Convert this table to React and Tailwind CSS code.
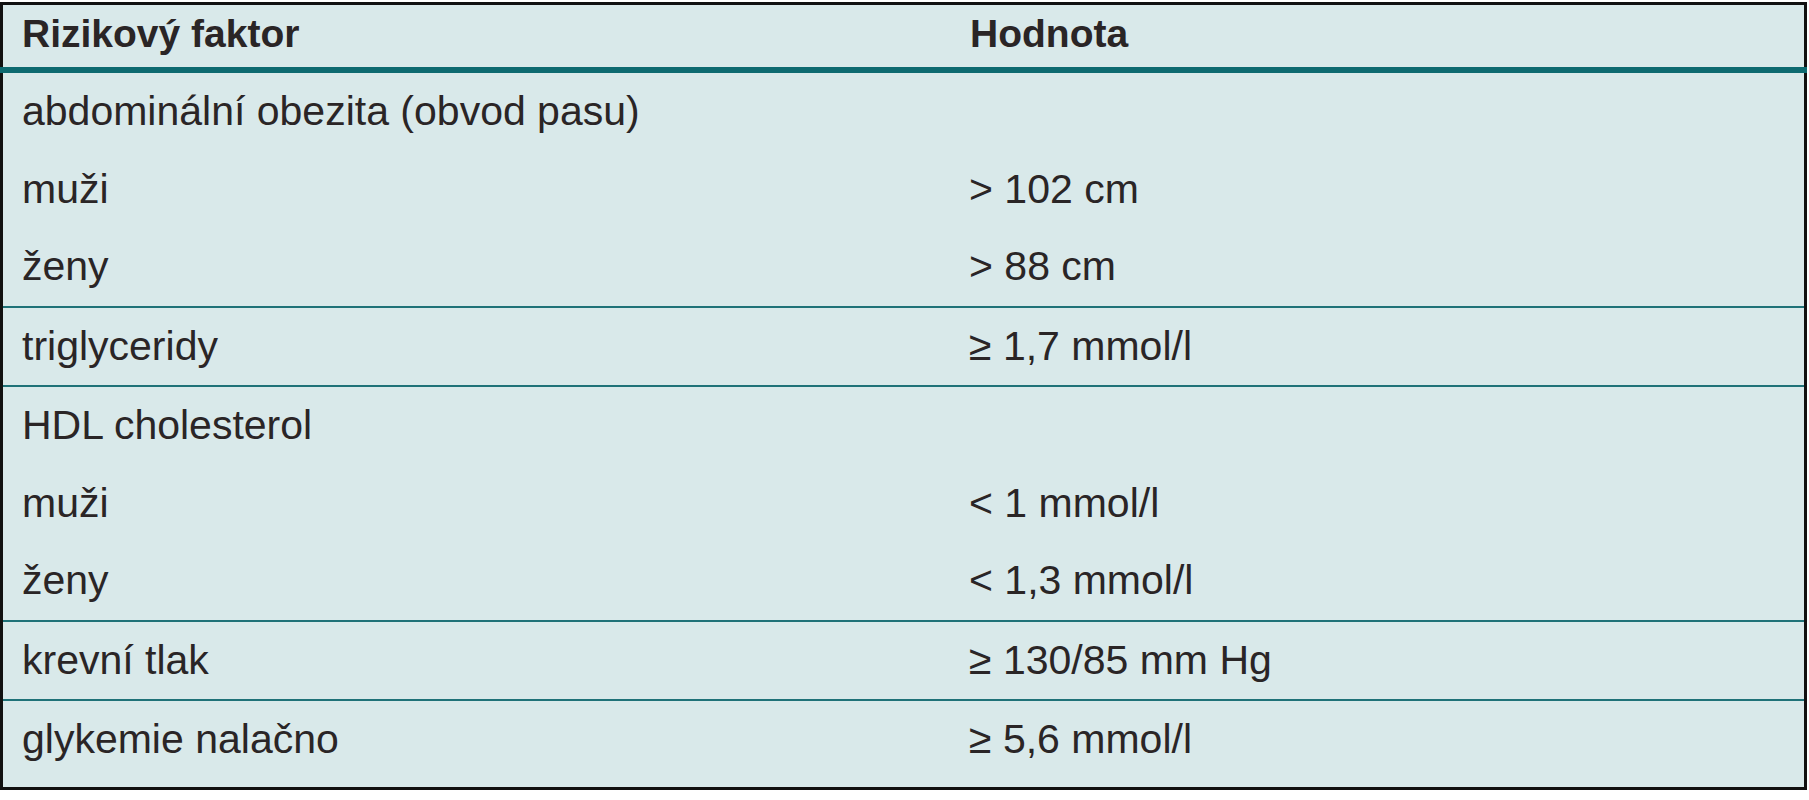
const groups = [
  [
    ['abdominální obezita (obvod pasu)', ''],
    ['muži', '> 102 cm'],
    ['ženy', '> 88 cm'],
  ],
  [['triglyceridy', '≥ 1,7 mmol/l']],
  [
    ['HDL cholesterol', ''],
    ['muži', '< 1 mmol/l'],
    ['ženy', '< 1,3 mmol/l'],
  ],
  [['krevní tlak', '≥ 130/85 mm Hg']],
  [['glykemie nalačno', '≥ 5,6 mmol/l']],
]

function Row({ label, value }) {
  return (
    <div className="flex h-[77.5px] leading-[77.5px]">
      <div className="w-[948px] pl-[19px]">{label}</div>
      <div className="pl-[18px]">{value}</div>
    </div>
  )
}

export default function App() {
  return (
    <div className="w-[1809px] h-[800px] bg-white pt-[2px]" style={{ fontFamily: '"Liberation Sans", Arial, sans-serif' }}>
      <div className="w-[1807px] border-[3px] border-[#111] bg-[#d9e9ea] text-[#2a2526] text-[41px] pb-[8px]">

        {/* Header */}
        <div className="flex h-[62px] leading-[58px] pb-[4px] font-bold text-[39px]">
          <div className="w-[948px] pl-[19px]">Rizikový faktor</div>
          <div className="pl-[19px]">Hodnota</div>
        </div>
        <div className="-mx-[3px] h-[6px] bg-[#0d6a70]" />

        {/* Body */}
        {groups.map((rows, i) => (
          <div key={i} className={i > 0 ? 'border-t-2 border-[#1f7278]' : ''}>
            {rows.map(([label, value], j) => (
              <Row key={j} label={label} value={value} />
            ))}
          </div>
        ))}

      </div>
    </div>
  )
}
